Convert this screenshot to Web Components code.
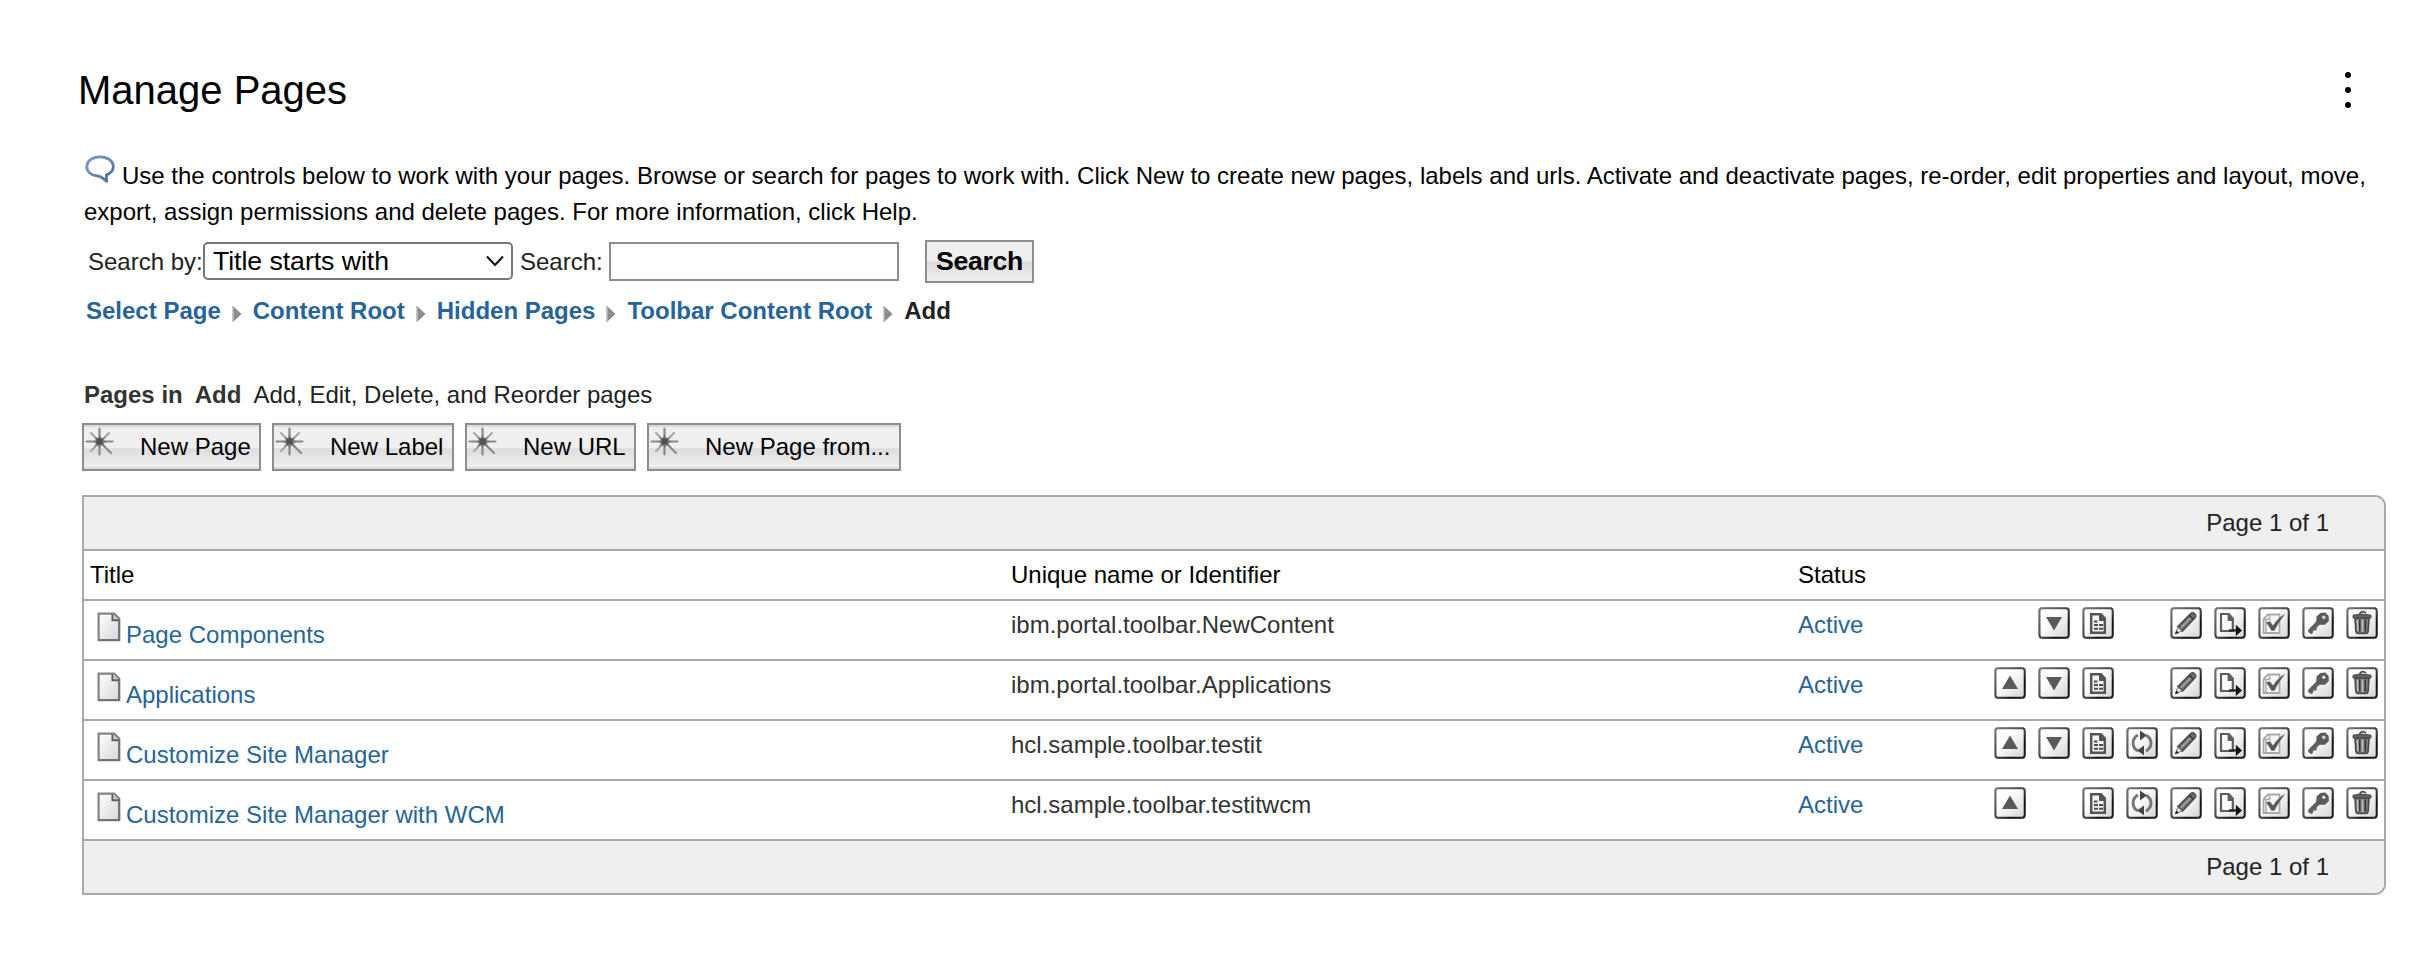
<!DOCTYPE html>
<html lang="en">
<head>
<meta charset="utf-8">
<title>Manage Pages</title>
<style>
body { margin: 0; background: #fff; color: #222; font: 24px/36px "Liberation Sans", Arial, sans-serif; }
</style>
</head>
<body>
<manage-pages></manage-pages>
<script>
const define = (name, css, html) => customElements.define(name, class extends HTMLElement {
  connectedCallback() {
    if (this.shadowRoot) return;
    const t = document.createElement('template');
    t.innerHTML = `<style>*{box-sizing:border-box}${css}</style>${typeof html === 'function' ? html(this) : html}`;
    this.attachShadow({ mode: 'open' }).append(t.content.cloneNode(true));
  }
});

/* ---- icons ---- */
const glyphs = {
  up: '<path fill="#5a5a5a" d="M16 8.5 24 22H8z"/>',
  down: '<path fill="#5a5a5a" d="M8 10h16l-8 13.5z"/>',
  doc: `<path fill="#f4f4f4" stroke="#555" stroke-width="2.500" d="M9.200 7.200h9l4.600 5v13.600H9.200z"/><path fill="#555" d="M17 6h2.500l4.500 5v3h-7z"/>
    <path stroke="#4c4c4c" stroke-width="2" d="M12 14.500h3.400M12 18h4M17 18h4M12 21.700h4M17 21.700h4"/>`,
  refresh: `<g fill="none" stroke="#777" stroke-width="3"><path d="M12 8C5.200 12 5.600 20.500 12 23.800"/><path d="M20 24.200C26.800 20 26.400 12 20.200 8.400"/></g>
    <path fill="#444" d="M14 3.400 20.800 8.300 14 13.400zM18 18.400v9.900L11.200 23.400z"/>`,
  edit: `<path fill="#707070" stroke="#505050" stroke-width="1.600" d="m7.800 19.600 13-13q1.800-1.600 3.800.2t.4 3.900L12.400 24z"/><path stroke="#a8a8a8" stroke-width="1.500" d="M11 20.700 20.500 11"/>
    <path fill="#e8e8e8" stroke="#777" stroke-width="1" d="M8 20.200 5.400 26.600 12 24z"/><path fill="#222" d="M6.400 23.400 5 27.200l4-1.300z"/><path stroke="#333" stroke-width="1.400" d="m19.300 8.300 4.200 4.200"/>`,
  export: `<path fill="#fff" stroke="#5c5c5c" stroke-width="2.200" d="M7 7h7.500l4.300 5v12H7z"/><path fill="#606060" d="M13.600 6.200h1.900l4.200 5.100v2.700h-6.100z"/>
    <path stroke="#222" stroke-width="2.200" d="M15 23.400h9"/><path fill="#111" d="m21.800 17.800 6.200 5.600-6.200 5.600z"/>`,
  check: `<path fill="#f6f6f6" stroke="#aaa" stroke-width="1.800" d="M10 7.500h11.500v18.500H5.500V12z"/><path fill="none" stroke="#aaa" stroke-width="1.500" d="M5.500 12.500H11.500V7M8 12v13"/>
    <path fill="#5a5a5a" d="m8.200 15.200 3.700-.7 3.100 4C18.500 13.300 22 9.800 27.400 6.800 22.700 12.300 19.200 18 16.500 23.800h-3z"/>`,
  key: `<path stroke="#606060" stroke-width="4.600" stroke-linecap="round" d="M16.500 15.500 8.400 23.800"/><path stroke="#606060" stroke-width="2.600" d="m11 20 3.200 3M7.300 23.300l3 3"/>
    <path fill="#5a5a5a" d="M14.600 9.300 18.400 5.900 23.200 5.600l3.400 3.400.2 5.100-3.800 3.700h-5.700l-3-2.900z"/><circle cx="21.800" cy="10.300" r="1.700" fill="#ddd"/>`,
  trash: `<path fill="#808080" stroke="#4c4c4c" stroke-width="1.800" d="M9 11h14l-1 13.500q-.3 1.900-2 1.900h-8q-1.700 0-2-1.900z"/><path stroke="#333" stroke-width="1.500" d="M13.700 12.500v12M19.300 12.500v12"/><path stroke="#bbb" stroke-width="1.700" d="M11.500 13l.3 11M16.500 12.500v12.500"/>
    <path fill="#606060" stroke="#4c4c4c" d="M7 8.200q9-2.200 18 0v2.800h-18z"/><path fill="none" stroke="#4c4c4c" stroke-width="1.800" d="M13.500 7q3-4.500 6.500-.8"/>`
};
define('tool-icon', ':host{display:block;width:32px;height:32px}svg{display:block}', el => `
  <svg width="32" height="32" viewBox="0 0 32 32" fill="none">
    <defs>
      <linearGradient id="f" x1="0" y1="0" x2="1" y2="1"><stop offset=".35" stop-color="#fff"/><stop offset="1" stop-color="#d4d4d4"/></linearGradient>
      <linearGradient id="s" x1="0" y1="0" x2="1" y2="1"><stop stop-color="#777"/><stop offset=".5" stop-color="#484848"/><stop offset=".75" stop-color="#111"/><stop offset="1" stop-color="#222"/></linearGradient>
    </defs>
    <rect x=".4" y=".4" width="31.200" height="31.200" rx="2.800" fill="#aaa"/>
    <rect x="1.500" y="1.300" width="29.200" height="29.400" rx="2.600" fill="url(#f)" stroke="url(#s)" stroke-width="2"/>
    ${glyphs[el.getAttribute('name')]}
  </svg>`);

define('page-icon', ':host{display:block;width:24px;height:30px}svg{display:block}', `
  <svg width="24" height="30" viewBox="0 0 24 30"><defs><linearGradient id="g" x1="0" y1="0" x2="1" y2="1"><stop offset=".2" stop-color="#f8f8f8"/><stop offset="1" stop-color="#d6d6d6"/></linearGradient></defs>
  <path d="M1.600 1.600h15.600l5 5v21.500H1.600z" fill="url(#g)" stroke="#858585" stroke-width="2.200"/>
  <path d="M22.200 7v21.100H1.500" fill="none" stroke="#707070" stroke-width="1.800"/>
  <path d="M15.400 2v6.300h6.500" fill="#ccc" stroke="#606060" stroke-width="1.900"/></svg>`);

define('chat-icon', ':host{display:inline-block;width:30px;height:28px}svg{display:block}', `
  <svg width="30" height="28" viewBox="0 0 30 28"><defs><linearGradient id="c" x1="0" y1="0" x2="1" y2="1"><stop stop-color="#7f9cc9"/><stop offset="1" stop-color="#5068a4"/></linearGradient></defs>
  <path d="M15 1.800C7.200 1.800 1.800 6 1.800 11.500S6.500 20.400 12.500 21C16 21.200 18 23 21.600 26.200L21.400 19.800C25.800 18.300 28.300 15.300 28.300 11.500 28.300 6 22.600 1.800 15 1.800z" fill="#fff" stroke="url(#c)" stroke-width="2.800" stroke-linejoin="round"/></svg>`);

define('more-menu', ':host{display:grid;gap:9px}i{display:block;width:6px;height:6px;border-radius:50%;background:#000}', '<i></i><i></i><i></i>');

/* ---- buttons ---- */
define('new-button', `
  :host{display:flex;align-items:flex-start;height:48px;border:2px solid #8d8d8d;color:#000;
    background:linear-gradient(#dadada 0 2px,transparent 2px),linear-gradient(#efefef 0 52%,#dcdcdc 54%,#e4e4e4 70%,#efefef 95%,#dadada 96%)}
  svg{display:block;width:30px;height:30px;margin:2px 25px 0 1px}
  span{line-height:44px;white-space:nowrap}`, `
  <svg viewBox="0 0 30 30"><g stroke="#8a8a8a" stroke-width="2.200" stroke-linecap="round"><path d="M14.500 1.500v26M1.500 14.500h26"/><path stroke="#a4a4a4" stroke-width="2" d="m6 6 8 8M24 6 6 24"/><path d="m15 15 11 11"/></g>
  <path fill="#7c7c7c" d="m14.500 7 2.200 4.400 3.600-1.700-1.800 3.500 4 1.300-4 1.700 1.700 4-4-2-1.600 3.900-1.800-3.900-3.700 1.800 1.900-3.700-4-1.800 4-1.300-1.900-3.500 3.600 1.700z"/><rect x="11.500" y="11.300" width="6.200" height="6.200" fill="#525252"/></svg>
  <span><slot></slot></span>`);

define('search-bar', `
  :host{display:flex;align-items:flex-start}
  label{line-height:36px;padding-top:4px;white-space:nowrap}
  .select{display:flex;justify-content:space-between;align-items:center;width:310px;height:38px;margin:2px 7px 0 0;padding:0 7px 0 8px;
    border:2px solid #767676;border-radius:5px;font-size:26.67px;letter-spacing:-.05px;color:#000;line-height:34px}
  input{width:290px;height:39px;margin:2px 26px 0 0;border:2px solid #8d8d8d;background:#fff;outline:0}
  button{width:109px;height:43px;padding:0 0 1px;border:2px solid #8d8d8d;font:bold 26.67px/38px "Liberation Sans",Arial,sans-serif;letter-spacing:-.3px;color:#000;
    background:linear-gradient(#efefef 0 48%,#dcdcdc 52%,#e4e4e4 70%,#efefef)}
  .a{width:115px}.b{width:89px}`, `
  <label class="a">Search by:</label>
  <div class="select"><span>Title starts with</span><svg width="18" height="12" viewBox="0 0 18 12"><path d="m1 1.500 8 8.500 8-8.500" fill="none" stroke="#111" stroke-width="2"/></svg></div>
  <label class="b">Search:</label><input><button>Search</button>`);

define('crumb-trail', `
  :host{display:flex;font-weight:bold;color:#26649a;line-height:36px}
  ::slotted(b){color:#222}`, '<slot></slot>');
define('crumb-link', ':host{display:flex;white-space:nowrap}svg{display:block;margin:12px 11px 0 11px}', `
  <slot></slot><svg width="10" height="18" viewBox="0 0 10 18"><path d="M1 1 9.500 9 1 17z" fill="#8c8c8c"/><path d="M1 1v16" stroke="#bbb" stroke-width="1.600"/></svg>`);

/* ---- table ---- */
define('pager-bar', `
  :host{display:flex;justify-content:flex-end;height:var(--h,54px);padding-right:55px;background:#efefef;color:#222;line-height:51px}`, '<slot></slot>');
define('head-row', `
  :host{display:grid;grid-template-columns:921px 787px 1fr;height:50px;padding-left:6px;border-bottom:2px solid #a9a9a9;color:#000;line-height:47px}`,
  '<span>Title</span><span>Unique name or Identifier</span><span>Status</span>');
define('page-row', `
  :host{display:grid;grid-template-columns:921px 787px 1fr auto;height:60px;padding:0 6px;border-bottom:2px solid #a9a9a9;color:#333;line-height:47px}
  .t{display:flex;padding-left:7px;color:#26649a;line-height:67px}
  page-icon{margin:11px 5px 0 0}
  a{color:#26649a}
  .acts{display:grid;grid-template-columns:repeat(9,32px);gap:12px;padding-top:6px}`, el => `
  <div class="t"><page-icon></page-icon><slot></slot></div><span>${el.getAttribute('uid')}</span><a>Active</a>
  <div class="acts">${['up','down','doc','refresh','edit','export','check','key','trash'].map(n =>
    (el.getAttribute('hide') || '').split(' ').includes(n) ? '<span></span>' : `<tool-icon name="${n}"></tool-icon>`).join('')}</div>`);
define('page-table', `
  :host{display:block;border:2px solid #a9a9a9;border-radius:0 11px 11px 0;overflow:hidden}
  .top{border-bottom:2px solid #a9a9a9}.bottom{--h:52px}`, `
  <pager-bar class="top">Page 1 of 1</pager-bar><head-row></head-row><slot></slot><pager-bar class="bottom">Page 1 of 1</pager-bar>`);

define('manage-pages', `
  :host{display:block;width:2432px;height:974px;overflow:hidden;background:#fff}
  header{display:flex;justify-content:space-between;padding:68px 81px 0 78px;height:158px;color:#000}
  h1{margin:0;font:40px/44px "Liberation Sans",Arial,sans-serif}
  more-menu{padding-top:4px;align-content:start}
  p{margin:0 40px 0 84px;height:82px;color:#000;white-space:nowrap}
  p chat-icon{vertical-align:top;margin:-3px 7px 0 1px}
  search-bar{padding-left:88px;height:53px}
  crumb-trail{padding-left:86px;height:84px}
  .intro{display:flex;padding-left:84px;height:46px;line-height:36px}
  .intro b{color:#333;margin-right:12px}
  .buttons{display:flex;gap:11px;padding-left:82px;height:72px}
  page-table{margin:0 46px 0 82px}`, `
  <header><h1>Manage Pages</h1><more-menu></more-menu></header>
  <p><chat-icon></chat-icon>Use the controls below to work with your pages. Browse or search for pages to work with. Click New to create new pages, labels and urls. Activate and deactivate pages, re-order, edit properties and layout, move,<br>export, assign permissions and delete pages. For more information, click Help.</p>
  <search-bar></search-bar>
  <crumb-trail><crumb-link>Select Page</crumb-link><crumb-link>Content Root</crumb-link><crumb-link>Hidden Pages</crumb-link><crumb-link>Toolbar Content Root</crumb-link><b>Add</b></crumb-trail>
  <div class="intro"><b>Pages in</b><b>Add</b><span>Add, Edit, Delete, and Reorder pages</span></div>
  <div class="buttons"><new-button style="width:179px">New Page</new-button><new-button style="width:182px">New Label</new-button><new-button style="width:171px">New URL</new-button><new-button style="width:254px">New Page from...</new-button></div>
  <page-table>
    <page-row uid="ibm.portal.toolbar.NewContent" hide="up refresh">Page Components</page-row>
    <page-row uid="ibm.portal.toolbar.Applications" hide="refresh">Applications</page-row>
    <page-row uid="hcl.sample.toolbar.testit">Customize Site Manager</page-row>
    <page-row uid="hcl.sample.toolbar.testitwcm" hide="down">Customize Site Manager with WCM</page-row>
  </page-table>`);
</script>
</body>
</html>
